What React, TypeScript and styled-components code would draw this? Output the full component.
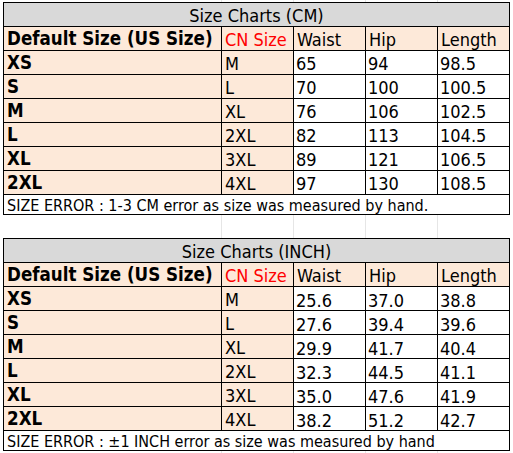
import React from 'react';
import styled, { createGlobalStyle } from 'styled-components';

const GlobalStyle = createGlobalStyle`
    html, body {
        margin: 0;
        padding: 0;
        background: #fff;
    }
`;

// faint spreadsheet gridlines behind the charts
const Page = styled.div`
    min-height: 453px;
    padding: 2px 0 0 3px;
    box-sizing: border-box;
    font-family: "DejaVu Sans Condensed", "DejaVu Sans", sans-serif;
    color: #000;
    background-image:
        linear-gradient(#e6e6e6, #e6e6e6),
        linear-gradient(#e6e6e6, #e6e6e6),
        linear-gradient(#e6e6e6, #e6e6e6),
        linear-gradient(#e6e6e6, #e6e6e6);
    background-size: 1px 100%;
    background-repeat: no-repeat;
    background-position: 221px 0, 293px 0, 365px 0, 437px 0;
    display: flex;
    flex-direction: column;
    gap: 23px;
`;

const ChartTable = styled.table`
    border-collapse: collapse;
    table-layout: fixed;
    width: 507px;
    background: #fff;
`;

const TitleCell = styled.th`
    height: 22px;
    padding: 0 0 1px;
    border: 1px solid #000;
    background: #d9d9d9;
    font-size: 18px;
    font-weight: normal;
    text-align: center;
    line-height: 1;
    vertical-align: bottom;
`;

const HeadCell = styled.th<{ $red?: boolean; $bold?: boolean }>`
    height: 22px;
    padding: 0 3px 1px;
    border: 1px solid #000;
    background: #fde9d9;
    color: ${p => (p.$red ? '#ff0000' : '#000')};
    font-size: ${p => (p.$bold ? '18.6px' : '18px')};
    font-weight: ${p => (p.$bold ? 'bold' : 'normal')};
    text-align: left;
    white-space: nowrap;
    line-height: 1;
    vertical-align: bottom;
    overflow: hidden;
`;

const SizeCell = styled.td<{ $bold?: boolean }>`
    height: 22px;
    padding: 0 3px 1px;
    border: 1px solid #000;
    background: #fde9d9;
    font-size: ${p => (p.$bold ? '18.6px' : '18px')};
    font-weight: ${p => (p.$bold ? 'bold' : 'normal')};
    line-height: 1;
    vertical-align: bottom;
`;

const ValueCell = styled.td<{ $drop?: boolean }>`
    height: 22px;
    padding: 0 2px ${p => (p.$drop ? '0' : '1px')};
    border: 1px solid #000;
    font-size: 18px;
    line-height: 1;
    vertical-align: bottom;
`;

const NoteCell = styled.td`
    height: 19px;
    padding: 0 3px;
    border: 1px solid #000;
    font-size: 16px;
    line-height: 1;
    vertical-align: bottom;
    white-space: nowrap;
`;

type Row = [string, string, string, string, string];

const cmRows: Row[] = [
    ['XS', 'M', '65', '94', '98.5'],
    ['S', 'L', '70', '100', '100.5'],
    ['M', 'XL', '76', '106', '102.5'],
    ['L', '2XL', '82', '113', '104.5'],
    ['XL', '3XL', '89', '121', '106.5'],
    ['2XL', '4XL', '97', '130', '108.5'],
];

const inchRows: Row[] = [
    ['XS', 'M', '25.6', '37.0', '38.8'],
    ['S', 'L', '27.6', '39.4', '39.6'],
    ['M', 'XL', '29.9', '41.7', '40.4'],
    ['L', '2XL', '32.3', '44.5', '41.1'],
    ['XL', '3XL', '35.0', '47.6', '41.9'],
    ['2XL', '4XL', '38.2', '51.2', '42.7'],
];

type ChartProps = { title: string; rows: Row[]; note: string; drop?: boolean };

const SizeChart = ({ title, rows, note, drop }: ChartProps) => (
    <ChartTable>
        <colgroup>
            <col style={{ width: 218 }} />
            <col style={{ width: 72 }} />
            <col style={{ width: 72 }} />
            <col style={{ width: 72 }} />
            <col style={{ width: 72 }} />
        </colgroup>
        <thead>
            <tr>
                <TitleCell colSpan={5}>{title}</TitleCell>
            </tr>
            <tr>
                <HeadCell $bold>Default Size (US Size)</HeadCell>
                <HeadCell $red>CN Size</HeadCell>
                <HeadCell>Waist</HeadCell>
                <HeadCell>Hip</HeadCell>
                <HeadCell>Length</HeadCell>
            </tr>
        </thead>
        <tbody>
            {rows.map(r => (
                <tr key={r[0]}>
                    <SizeCell $bold>{r[0]}</SizeCell>
                    <SizeCell>{r[1]}</SizeCell>
                    <ValueCell $drop={drop}>{r[2]}</ValueCell>
                    <ValueCell $drop={drop}>{r[3]}</ValueCell>
                    <ValueCell $drop={drop}>{r[4]}</ValueCell>
                </tr>
            ))}
            <tr>
                <NoteCell colSpan={5}>{note}</NoteCell>
            </tr>
        </tbody>
    </ChartTable>
);

export default function App() {
    return (
        <>
            <GlobalStyle />
            <Page>
                <SizeChart
                    title="Size Charts (CM)"
                    rows={cmRows}
                    note="SIZE ERROR : 1-3 CM error as size was measured by hand."
                />
                <SizeChart
                    title="Size Charts (INCH)"
                    rows={inchRows}
                    note="SIZE ERROR : ±1 INCH error as size was measured by hand"
                    drop
                />
            </Page>
        </>
    );
}
